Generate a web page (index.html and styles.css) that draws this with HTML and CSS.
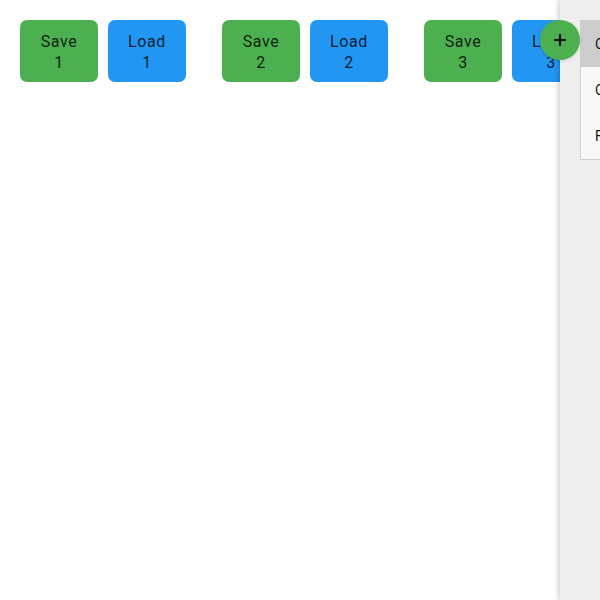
FILE: index.html
```html
<!DOCTYPE html>
<html lang="en">
<head>
<meta charset="utf-8">
<title>Slots</title>
<link rel="stylesheet" href="styles.css">
</head>
<body>
<main class="slots">
  <div class="slot">
    <button class="btn btn-save">Save 1</button>
    <button class="btn btn-load">Load 1</button>
  </div>
  <div class="slot">
    <button class="btn btn-save">Save 2</button>
    <button class="btn btn-load">Load 2</button>
  </div>
  <div class="slot">
    <button class="btn btn-save">Save 3</button>
    <button class="btn btn-load">Load 3</button>
  </div>
</main>
<aside class="panel">
  <ul class="menu">
    <li class="menu-item active">Copy</li>
    <li class="menu-item">Clear</li>
    <li class="menu-item">Fill</li>
  </ul>
</aside>
<button class="fab" aria-label="Add">
  <svg width="14" height="14" viewBox="0 0 14 14"><path d="M7 1v12M1 7h12" stroke="#111" stroke-width="2.2" fill="none"/></svg>
</button>
</body>
</html>
```

FILE: styles.css
```css
html, body {
  margin: 0;
  padding: 0;
  background: #fff;
  font-family: Roboto, "Liberation Sans", sans-serif;
}
.slots {
  display: flex;
  gap: 36px;
  padding: 20px;
}
.slot {
  display: flex;
  gap: 10px;
}
.btn {
  width: 78px;
  height: 62px;
  padding: 11px 8px 9px;
  border: none;
  border-radius: 7px;
  font-family: Roboto, "Liberation Sans", sans-serif;
  font-size: 16px;
  line-height: 21px;
  letter-spacing: 0.6px;
  color: rgba(0, 0, 0, 0.82);
  text-align: center;
  white-space: normal;
  word-spacing: 100px;
}
.btn-save { background: #4caf50; }
.btn-load { background: #2196f3; }
.panel {
  position: fixed;
  top: 0;
  bottom: 0;
  left: 560px;
  width: 240px;
  background: #eeeeee;
  box-shadow: -2px 0 5px rgba(0,0,0,0.18);
  padding: 20px;
  box-sizing: border-box;
}
.menu {
  list-style: none;
  margin: 0;
  padding: 0;
  background: #f8f8f8;
  border: 1px solid #cfcfcf;
}
.menu-item {
  height: 46px;
  line-height: 46px;
  padding: 0 14px;
  font-size: 14px;
  color: #111;
}
.menu-item.active { background: #cccccc; }
.fab {
  position: fixed;
  top: 20px;
  left: 540px;
  width: 40px;
  height: 40px;
  border: none;
  border-radius: 50%;
  background: #4caf50;
  padding: 0;
  display: flex;
  align-items: center;
  justify-content: center;
  box-shadow: 0 1px 3px rgba(0,0,0,0.15);
}
```
